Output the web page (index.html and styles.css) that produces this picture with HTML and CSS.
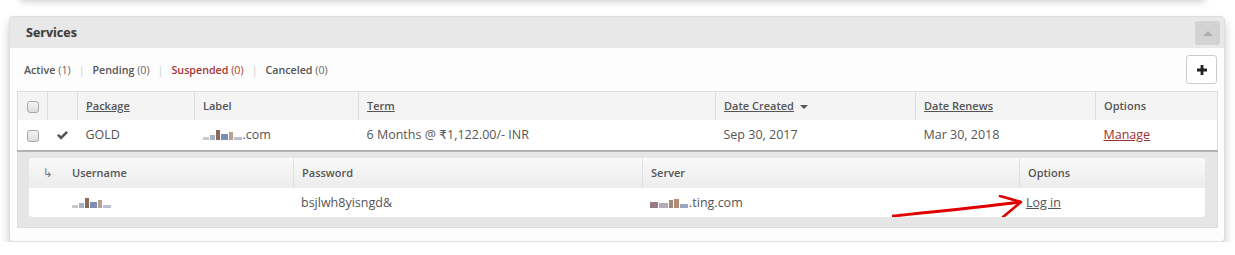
FILE: index.html
```html
<!DOCTYPE html>
<html lang="en">
<head>
    <meta charset="UTF-8">
    <title>Services</title>
    <link rel="stylesheet" href="styles.css">
</head>
<body>
    <!-- bottom of the previous panel -->
    <div class="prev-panel"></div>

    <div class="panel">
        <div class="panel-header">
            <h3 class="panel-title">Services</h3>
            <button class="collapse-btn" aria-label="Collapse">
                <svg width="10" height="6" viewBox="0 0 10 6"><path d="M0 6 L5 1 L10 6 Z" fill="#adadad"/></svg>
            </button>
        </div>

        <div class="panel-body">
            <div class="toolbar">
                <ul class="status-tabs">
                    <li><b>Active</b> (1)</li>
                    <li class="sep">|</li>
                    <li><b>Pending</b> (0)</li>
                    <li class="sep">|</li>
                    <li class="current"><b>Suspended</b> (0)</li>
                    <li class="sep">|</li>
                    <li><b>Canceled</b> (0)</li>
                </ul>
                <button class="add-btn" aria-label="Add">
                    <svg width="10" height="10" viewBox="0 0 10 10"><path d="M3.6 0h2.8v3.6H10v2.8H6.4V10H3.6V6.4H0V3.6h3.6z" fill="#222"/></svg>
                </button>
            </div>

            <table class="services">
                <colgroup>
                    <col style="width:30px"><col style="width:30px"><col style="width:117px"><col style="width:164px">
                    <col style="width:357px"><col style="width:200px"><col style="width:180px"><col style="width:122px">
                </colgroup>
                <thead>
                    <tr>
                        <th class="center"><span class="checkbox"></span></th>
                        <th></th>
                        <th><a href="#">Package</a></th>
                        <th>Label</th>
                        <th><a href="#">Term</a></th>
                        <th><a href="#">Date Created</a> <span class="sort-caret"></span></th>
                        <th><a href="#">Date Renews</a></th>
                        <th>Options</th>
                    </tr>
                </thead>
                <tbody>
                    <tr class="service-row">
                        <td class="center"><span class="checkbox"></span></td>
                        <td class="center">
                            <svg class="check" width="11" height="9" viewBox="0 0 11 9"><path d="M0 4.6 L1.8 2.9 L4.1 5.1 L9.2 0 L11 1.8 L4.1 8.7 Z" fill="#555"/></svg>
                        </td>
                        <td>GOLD</td>
                        <td><span class="redacted"><i class="r1"></i><i class="r2"></i><i class="r3"></i><i class="r4"></i><i class="r5"></i><i class="r6"></i></span>.com</td>
                        <td>6 Months @ ₹1,122.00/- INR</td>
                        <td>Sep 30, 2017</td>
                        <td>Mar 30, 2018</td>
                        <td><a href="#" class="manage">Manage</a></td>
                    </tr>
                    <tr class="expand-row">
                        <td colspan="8">
                            <table class="accounts">
                                <colgroup>
                                    <col style="width:33px"><col style="width:231px"><col style="width:349px"><col style="width:377px"><col style="width:186px">
                                </colgroup>
                                <thead>
                                    <tr>
                                        <th class="center nested">&#8627;</th>
                                        <th class="user-col">Username</th>
                                        <th>Password</th>
                                        <th>Server</th>
                                        <th>Options</th>
                                    </tr>
                                </thead>
                                <tbody>
                                    <tr>
                                        <td></td>
                                        <td class="user-col"><span class="redacted small"><i class="r1"></i><i class="r2"></i><i class="r3"></i><i class="r4"></i><i class="r5"></i><i class="r6"></i></span></td>
                                        <td>bsjlwh8yisngd&amp;</td>
                                        <td><span class="redacted server"><i class="s1"></i><i class="s2"></i><i class="s3"></i><i class="s4"></i><i class="s5"></i></span>.ting.com</td>
                                        <td class="login-cell">
                                            <svg class="pointer" width="140" height="26" viewBox="0 0 140 26">
                                                <path d="M1 21 C40 17, 90 12, 128 7" stroke="#e00000" stroke-width="2.8" fill="none" stroke-linecap="round"/>
                                                <path d="M108 1 L129 7 L111 22" stroke="#e00000" stroke-width="2.6" fill="none" stroke-linecap="round" stroke-linejoin="round"/>
                                            </svg>
                                            <a href="#">Log in</a>
                                        </td>
                                    </tr>
                                </tbody>
                            </table>
                        </td>
                    </tr>
                </tbody>
            </table>
        </div>
    </div>
</body>
</html>
```

FILE: styles.css
```css
/* Base */
* {
    box-sizing: border-box;
    margin: 0;
    padding: 0;
}

body {
    font-family: 'Open Sans', 'DejaVu Sans', sans-serif;
    background: #ffffff;
    color: #555555;
    overflow: hidden;
}

a {
    color: #555555;
}

/* Previous panel (only its shadow shows) */
.prev-panel {
    height: 10px;
    margin: -10px 30px 0 20px;
    background: #ffffff;
    box-shadow: 0 2px 6px rgba(0, 0, 0, 0.18);
}

/* Panel */
.panel {
    margin: 16px 10px 0 9px;
    border: 1px solid #dedede;
    border-radius: 4px;
    background: #fdfdfd;
    box-shadow: 0 6px 10px rgba(0, 0, 0, 0.22);
}

.panel-header {
    height: 31px;
    display: flex;
    align-items: center;
    justify-content: space-between;
    padding: 0 4px 0 16px;
    background: #e8e8e8;
    border-radius: 4px 4px 0 0;
}

.panel-title {
    font-size: 12.5px;
    font-weight: 700;
    color: #404040;
    text-shadow: 0 0 1px rgba(0, 0, 0, 0.2);
}

.collapse-btn {
    width: 25px;
    height: 24px;
    border: none;
    border-radius: 3px;
    background: #d3d3d3;
    display: flex;
    align-items: center;
    justify-content: center;
    margin-top: 1px;
}

.panel-body {
    padding: 7px 7px 13px 7px;
}

/* Status filter + add button */
.toolbar {
    display: flex;
    align-items: center;
    justify-content: space-between;
    height: 29px;
    margin-bottom: 7px;
}

.status-tabs {
    list-style: none;
    display: flex;
    gap: 8px;
    padding-left: 7px;
    font-size: 10.7px;
    color: #666666;
}

.status-tabs b {
    font-weight: 600;
    color: #555555;
}

.status-tabs .sep {
    color: #d0d0d0;
}

.status-tabs .current,
.status-tabs .current b {
    color: #a93636;
}

.add-btn {
    width: 31px;
    height: 29px;
    background: #ffffff;
    border: 1px solid #cccccc;
    border-radius: 3px;
    display: flex;
    align-items: center;
    justify-content: center;
}

/* Services table */
.services {
    width: 1200px;
    table-layout: fixed;
    border-collapse: collapse;
    border: 1px solid #dddddd;
}

.services > thead th {
    height: 28px;
    background: #f4f4f4;
    border-left: 1px solid #dddddd;
    text-align: left;
    padding: 0 8px;
    font-size: 11px;
    font-weight: 600;
    color: #555555;
}

.services > thead th:first-child {
    border-left: none;
}

.services th.center,
.services td.center {
    text-align: center;
    padding: 0;
}

.sort-caret {
    display: inline-block;
    margin-left: 3px;
    border-left: 4px solid transparent;
    border-right: 4px solid transparent;
    border-top: 4px solid #555555;
    vertical-align: middle;
}

.checkbox {
    display: inline-block;
    width: 12px;
    height: 12px;
    border: 1px solid #a9a9a9;
    border-radius: 3px;
    background: linear-gradient(#f4f4f4, #dcdcdc);
    vertical-align: middle;
}

.service-row td {
    height: 31px;
    background: #ffffff;
    padding: 0 8px;
    font-size: 12.5px;
    color: #555555;
    white-space: nowrap;
    border-bottom: 2px solid #b3b3b3;
}

.check {
    vertical-align: middle;
}

.manage {
    color: #9c2f2f;
}

/* Redacted bits (blurred in the capture) */
.redacted {
    display: inline-flex;
    align-items: flex-end;
    gap: 1px;
    height: 12px;
    margin-right: 1px;
    vertical-align: -1px;
}

.redacted i {
    display: block;
    width: 4px;
}

.redacted .r1 { height: 3px; width: 6px; background: #c9c9c9; }
.redacted .r2 { height: 5px; width: 5px; background: #a8b0c8; }
.redacted .r3 { height: 10px; width: 4px; background: #8a6a5a; }
.redacted .r4 { height: 6px; width: 7px; background: #7d8db3; }
.redacted .r5 { height: 8px; width: 4px; background: #b7a08e; }
.redacted .r6 { height: 3px; width: 8px; background: #b8bfd3; }

.redacted.small {
    height: 10px;
}

.redacted.server .s1 { height: 6px; width: 8px; background: #9a7c86; }
.redacted.server .s2 { height: 5px; width: 9px; background: #b3acb8; }
.redacted.server .s3 { height: 8px; width: 4px; background: #a0897c; }
.redacted.server .s4 { height: 9px; width: 5px; background: #b98a72; }
.redacted.server .s5 { height: 4px; width: 8px; background: #9aa7c4; }

/* Expanded accounts */
.expand-row > td {
    background: #e6e6e6;
    padding: 6px 11px 10px 11px;
}

.accounts {
    width: 1176px;
    table-layout: fixed;
    border-collapse: separate;
    border-spacing: 0;
    background: #ffffff;
    border-radius: 4px;
    overflow: hidden;
}

.accounts th {
    height: 30px;
    background: linear-gradient(#fafafa, #ececec);
    border-left: 1px solid #e0e0e0;
    text-align: left;
    padding: 0 8px;
    font-size: 11px;
    font-weight: 600;
    color: #555555;
}

.accounts th:first-child,
.accounts th:nth-child(2) {
    border-left: none;
}

.accounts th.nested {
    font-size: 12px;
    color: #777777;
    font-weight: 400;
    padding-left: 4px;
}

.accounts .user-col {
    padding-left: 10px;
}

.accounts td {
    height: 29px;
    padding: 0 8px;
    font-size: 12.5px;
    color: #555555;
    white-space: nowrap;
}

.login-cell {
    position: relative;
}

.login-cell a {
    margin-left: -1px;
}

/* Hand-drawn pointer arrow over the table */
.pointer {
    position: absolute;
    left: -127px;
    top: 7px;
    pointer-events: none;
}
```
